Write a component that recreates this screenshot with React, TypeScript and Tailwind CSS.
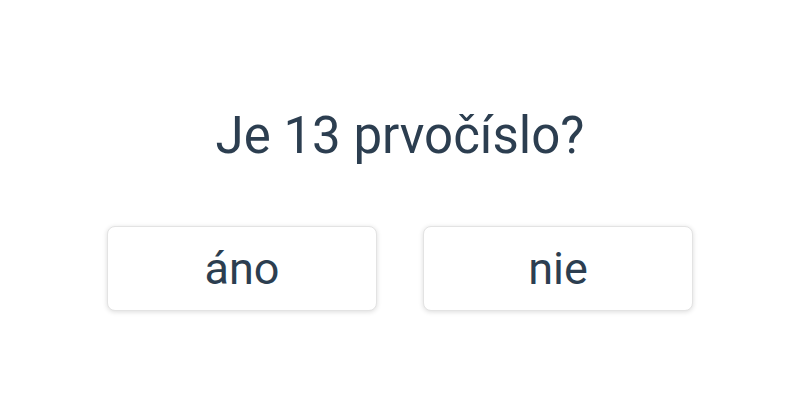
export default function App() {
  return (
    <div className="w-[800px] h-[400px] bg-white flex flex-col items-center text-[#2c3e50]" style={{ fontFamily: "Roboto, sans-serif" }}>
      <h1 className="mt-[104px] text-[51px] leading-[64px] font-normal">Je 13 prvočíslo?</h1>
      <div className="mt-[58px] flex gap-[46px]">
        <button className="w-[270px] h-[85px] rounded-lg border border-[#e3e3e3] bg-white shadow-[0_1px_5px_rgba(0,0,0,0.14)] text-[45px]">áno</button>
        <button className="w-[270px] h-[85px] rounded-lg border border-[#e3e3e3] bg-white shadow-[0_1px_5px_rgba(0,0,0,0.14)] text-[45px]">nie</button>
      </div>
    </div>
  );
}
